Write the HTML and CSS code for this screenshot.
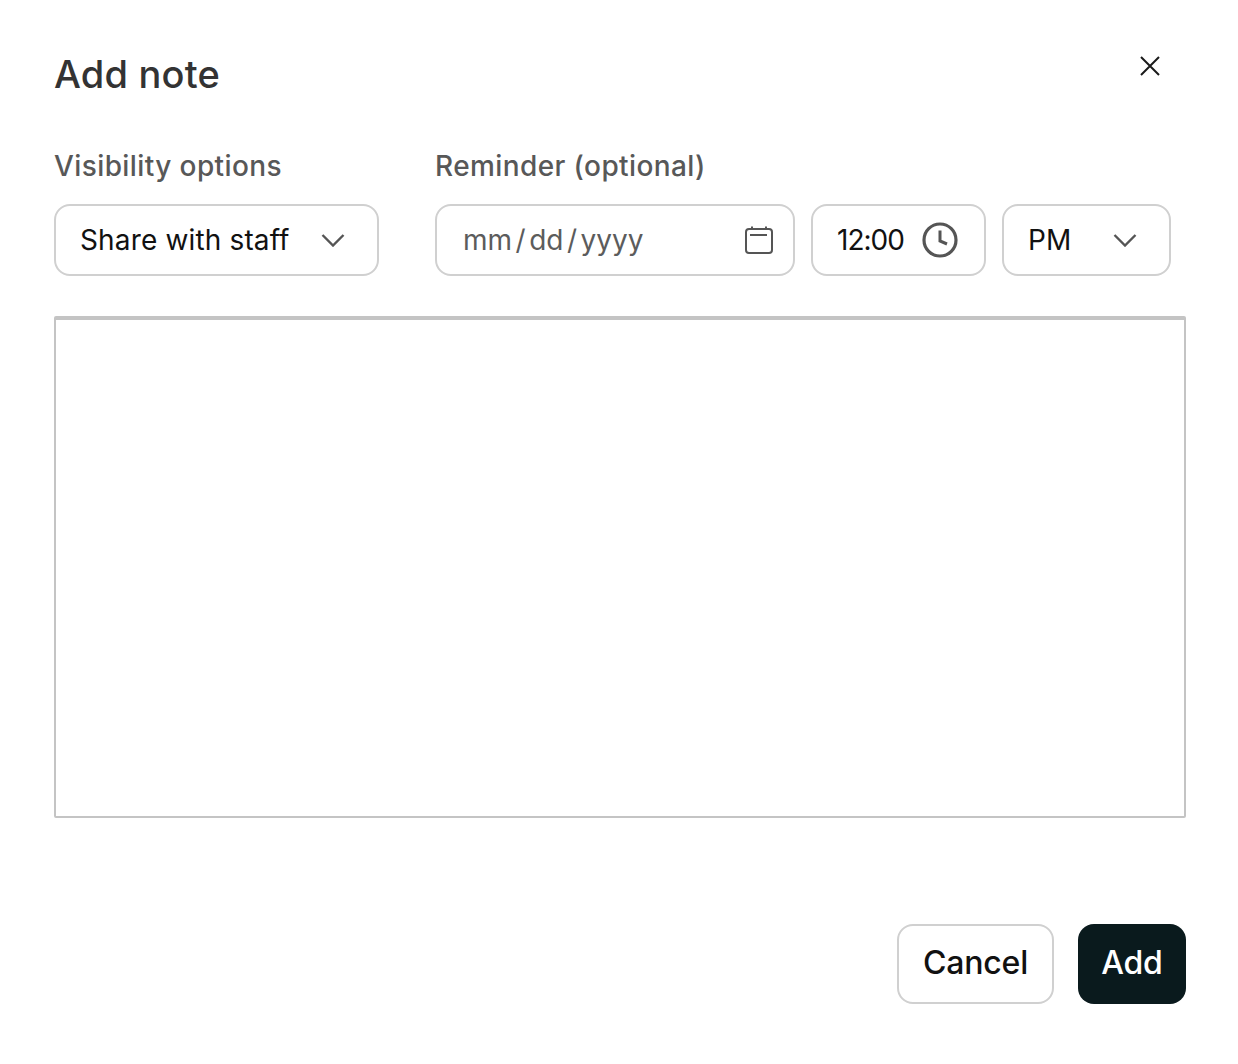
FILE: index.html
```
<!DOCTYPE html>
<html lang="en">
<head>
<meta charset="utf-8">
<title>Add note</title>
<link rel="stylesheet" href="styles.css">
</head>
<body>
<main class="modal">
  <header class="head">
    <h1 class="title">Add note</h1>
    <button class="close" aria-label="Close">
      <svg width="20" height="20" viewBox="0 0 20 20"><path d="M1 1L19 19M19 1L1 19" fill="none" stroke="#1a1a1a" stroke-width="2"/></svg>
    </button>
  </header>
  <section class="fields">
    <div class="group">
      <div class="label">Visibility options</div>
      <div class="control vis">
        <span class="val">Share with staff</span>
        <svg class="chev" width="24" height="14" viewBox="0 0 24 14"><path d="M1.500 2L12 12.500L22.500 2" fill="none" stroke="#555" stroke-width="2.400"/></svg>
      </div>
    </div>
    <div class="group">
      <div class="label">Reminder (optional)</div>
      <div class="row">
        <div class="control date">
          <span class="val ph">mm<i>/</i>dd<i>/</i>yyyy</span>
          <svg width="28" height="28" viewBox="0 0 28 28"><g fill="none" stroke="#555" stroke-width="2"><rect x="1" y="3" width="26" height="24" rx="3"/><path d="M7 0.500V4M21 0.500V4M5 9H22"/></g></svg>
        </div>
        <div class="control time">
          <span class="val clock">12:00</span>
          <svg width="36" height="36" viewBox="0 0 36 36"><g fill="none" stroke="#555"><circle cx="18" cy="18" r="16" stroke-width="3.200"/><path d="M18 8.500V19L25 22" stroke-width="3"/></g></svg>
        </div>
        <div class="control ampm">
          <span class="val">PM</span>
          <svg class="chev" width="24" height="14" viewBox="0 0 24 14"><path d="M1.500 2L12 12.500L22.500 2" fill="none" stroke="#555" stroke-width="2.400"/></svg>
        </div>
      </div>
    </div>
  </section>
  <textarea class="note" aria-label="Note"></textarea>
  <footer class="actions">
    <button class="btn cancel">Cancel</button>
    <button class="btn add">Add</button>
  </footer>
</main>
</body>
</html>
```
FILE: styles.css
```
* { box-sizing: border-box; }
html, body { margin: 0; padding: 0; background: #fff; }
body { font-family: Inter, "Liberation Sans", sans-serif; color: #111; }
.modal { width: 1238px; height: 1064px; padding: 48px 52px 60px 54px; display: flex; flex-direction: column; }
.head { display: flex; justify-content: space-between; align-items: flex-start; height: 56px; }
.title { margin: 0; font-size: 38px; line-height: 53px; font-weight: 500; letter-spacing: 0.2px; color: #333; }
.close { border: 0; background: none; padding: 0; margin: 8px 26px 0 0; width: 20px; height: 20px; display: block; }
.close svg { display: block; }
.fields { display: flex; gap: 56px; margin-top: 42px; }
.label { font-size: 28px; line-height: 40px; font-weight: 500; letter-spacing: 0.4px; color: #585858; margin-bottom: 18px; }
.row { display: flex; gap: 16px; }
.control { height: 72px; border: 2px solid #d0d0d0; border-radius: 16px; display: flex; align-items: center; justify-content: space-between; font-size: 28px; color: #111; background: #fff; }
.val { line-height: 34px; margin-top: -1px; letter-spacing: 0.15px; }
.vis { width: 325px; padding: 0 32px 0 24px; }
.date { width: 360px; padding: 0 20px 0 26px; color: #5c5c5c; }
.time { width: 175px; padding: 0 26px 0 24px; }
.ampm { width: 169px; padding: 0 32px 0 24px; }
.ph { letter-spacing: 0; }
.ph i { font-style: normal; margin: 0 3.500px; }
.clock { letter-spacing: -1px; }
.note { display: block; width: 1132px; height: 502px; margin: 40px 0 0; padding: 0; border: 2px solid #c4c4c4; border-top-width: 4px; border-radius: 2px; outline: 0; resize: none; background: #fff; }
.actions { display: flex; justify-content: flex-end; gap: 24px; margin-top: 106px; }
.btn { height: 80px; border-radius: 16px; font-family: inherit; font-size: 32px; line-height: 38px; font-weight: 500; letter-spacing: -0.2px; padding: 0 0 2px; }
.cancel { width: 157px; background: #fff; border: 2px solid #d0d0d0; color: #111; }
.add { width: 108px; background: #0a1a1d; border: 0; color: #fff; }
```
